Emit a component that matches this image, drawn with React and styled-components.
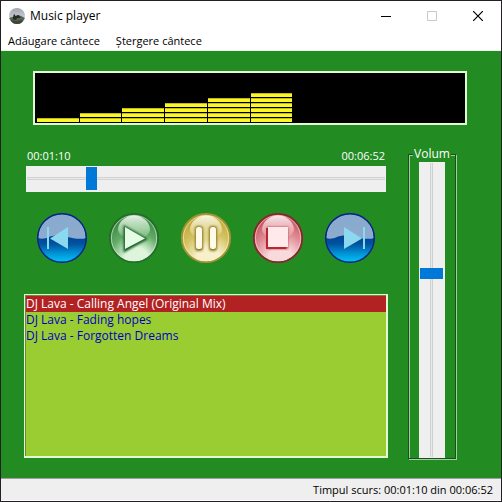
import React, { useState } from "react";
import styled, { createGlobalStyle, css } from "styled-components";

const green = "#228b22";
const pale = "#e4f8d4";

const GlobalStyle = createGlobalStyle`
  *, *::before, *::after { box-sizing: border-box; }
  body {
    margin: 0;
    background: #fff;
    color: #000;
    font-family: "Open Sans", "Noto Sans", sans-serif;
    font-size: 11px;
    line-height: 16px;
  }
  button, input { font: inherit; color: inherit; margin: 0; }
`;

const Window = styled.div`
  display: flex;
  flex-direction: column;
  min-height: 100vh;
  border: 1px solid #231f24;
  background: ${green};
`;

const TitleBar = styled.header`
  display: flex;
  align-items: center;
  height: 30px;
  padding-left: 8px;
  background: #fff;
`;

const Title = styled.h1`
  flex: 1;
  margin: 0 0 0 5px;
  font-size: 12px;
  font-weight: 400;
`;

const CaptionButton = styled.button`
  display: grid;
  place-items: center;
  width: 46px;
  height: 30px;
  padding: 0;
  border: 0;
  background: none;
`;

const MenuBar = styled.nav`
  display: flex;
  gap: 16px;
  height: 20px;
  padding: 0 7px;
  background: #fff;
  border-bottom: 1px solid #eef7ea;
`;

const MenuItem = styled.button`
  padding: 0;
  border: 0;
  background: none;
  line-height: 19px;
`;

const Main = styled.main`
  flex: 1;
  display: flex;
  flex-direction: column;
  gap: 22px;
  padding: 20px 45px 18px 23px;
`;

const Visualizer = styled.div`
  display: grid;
  grid-template-columns: repeat(10, 1fr);
  align-items: end;
  gap: 1px;
  height: 54px;
  margin: 0 -11px 0 9px;
  padding: 1px 2px;
  border: 2px solid ${pale};
  background: #000;
`;

const Bar = styled.div`
  display: flex;
  flex-direction: column;
  gap: 1px;
`;

const Segment = styled.div`
  height: 4px;
  border: 1px solid #c2ba1c;
  border-width: 1px 0 0;
  background: #fbf628;
`;

const Body = styled.div`
  flex: 1;
  display: flex;
  gap: 20px;
`;

const PlayerColumn = styled.div`
  flex: 1;
  min-width: 0;
  display: flex;
  flex-direction: column;
  padding-bottom: 2px;
`;

const Seek = styled.div`
  padding: 1px 2px 0;
`;

const Times = styled.div`
  display: flex;
  justify-content: space-between;
  height: 18px;
  padding: 0 1px;
  color: #fff;
`;

const thumb = css`
  appearance: none;
  border: 0;
  border-radius: 0;
  background: #0078d7;
`;

const Slider = styled.input`
  appearance: none;
  display: block;
  background: #efefef;

  ${(p) =>
    p.$vertical
      ? css`
          writing-mode: vertical-lr;
          direction: rtl;
          flex: 1;
          width: 26px;
          min-height: 0;
          padding: 1px 2px 1px 1px;
          &::-webkit-slider-runnable-track {
            width: 23px;
            background: linear-gradient(to right, transparent 10px, #cfd0d2 10px 11px, #e7eaea 11px 12px, #cfd0d2 12px 13px, transparent 13px);
          }
          &::-webkit-slider-thumb {
            ${thumb}
            width: 23px;
            height: 11px;
          }
        `
      : css`
          width: 100%;
          height: 26px;
          padding: 1px 1px 2px;
          &::-webkit-slider-runnable-track {
            height: 23px;
            background: linear-gradient(transparent 10px, #d2d2d2 10px 11px, #e7eaea 11px 12px, #d2d2d2 12px 13px, transparent 13px);
          }
          &::-webkit-slider-thumb {
            ${thumb}
            width: 11px;
            height: 23px;
          }
        `}
`;

const Controls = styled.div`
  display: grid;
  grid-template-columns: repeat(5, 1fr);
  justify-items: center;
  padding: 20px 2px 30px;
`;

const RoundButton = styled.button`
  width: 52px;
  height: 52px;
  padding: 0;
  border: 0;
  border-radius: 50%;
  background: none;
  svg { display: block; }
`;

const Playlist = styled.ul`
  flex: 1;
  margin: 0;
  padding: 1px 0;
  list-style: none;
  border: 1px solid ${pale};
  border-width: 1px 2px 2px 1px;
  background: #9acd32;
  box-shadow: inset 1px 1px 0 #6f8a35;
`;

const Track = styled.li`
  margin-left: 1px;
  background: ${(p) => (p.$selected ? "#b22222" : "transparent")};
`;

const TrackButton = styled.button`
  display: block;
  width: 100%;
  padding: 0;
  border: 0;
  background: none;
  color: ${(p) => (p.$selected ? "#fff" : "#0000c4")};
  font-size: 12px;
  text-align: left;
  white-space: nowrap;
`;

const VolumeGroup = styled.fieldset`
  display: flex;
  flex-direction: column;
  align-items: center;
  width: 48px;
  min-width: 0;
  margin: 0 0 1px;
  padding: 1px 0 0;
  border: 1px solid #17501a;
  box-shadow: inset 1px 1px 0 #a3cfa0, 1px 1px 0 #a3cfa0;
`;

const VolumeLegend = styled.legend`
  margin: 0 auto;
  padding: 0 1px;
  background: ${green};
  color: #fff;
  font-size: 12px;
  line-height: 14px;
`;

const StatusBar = styled.footer`
  height: 23px;
  padding: 3px 8px 0;
  border-top: 1px solid #a0a0a0;
  border-bottom: 1px solid #fff;
  background: #efefef;
  text-align: right;
`;

const AppIcon = () => (
  <svg width="16" height="16" viewBox="0 0 16 16" aria-hidden="true">
    <defs>
      <clipPath id="app-clip"><circle cx="8" cy="8" r="8" /></clipPath>
      <linearGradient id="app-sky" x1="0" y1="0" x2="0" y2="1">
        <stop offset="0" stopColor="#a4a6b0" />
        <stop offset=".6" stopColor="#c9cbd1" />
      </linearGradient>
    </defs>
    <g clipPath="url(#app-clip)">
      <path fill="url(#app-sky)" d="M0 0h16v16H0z" />
      <path fill="#59634f" d="M0 10l3-1 3-.5 3-1.5 3 1 4 2v6H0z" />
      <path fill="#252b25" d="M4 10l.5-3 1-1 1 2 3-1 2 2-1 1H8l-1 2-3-.5z" />
      <path fill="#3c4638" d="M2 12l5 1 7-1-2 4H4z" />
    </g>
  </svg>
);

const BlueDisc = ({ id, next }) => (
  <svg width="52" height="52" viewBox="0 0 52 52" aria-hidden="true">
    <defs>
      <linearGradient id={id} x1="0" y1="0" x2="0" y2="1">
        <stop offset=".45" stopColor="#004493" />
        <stop offset=".62" stopColor="#00529f" />
        <stop offset=".82" stopColor="#0294d5" />
        <stop offset="1" stopColor="#05c4f4" />
      </linearGradient>
      <linearGradient id={`${id}-gloss`} x1="0" y1="0" x2="0" y2="1">
        <stop offset="0" stopColor="#86aacd" />
        <stop offset="1" stopColor="#8eabcf" />
      </linearGradient>
    </defs>
    <circle cx="26" cy="26" r="24.4" fill={`url(#${id})`} />
    <path fill={`url(#${id}-gloss)`} d="M2 26A24 24 0 0 1 50 26C44 28 37 26 31 25C23 23 18 23 13 25C9 27 5 27 2 26z" />
    <circle cx="26" cy="26" r="24.3" fill="none" stroke="#07228a" strokeWidth="1.4" />
    {next ? (
      <g fill="#8bd9ee">
        <path d="M20 15L38 26.5L20 37z" />
        <path d="M39 15h2v22h-2z" />
      </g>
    ) : (
      <g fill="#8bd9ee">
        <path d="M32 15L14 26.5L32 37z" />
        <path d="M11 15h2v22h-2z" />
      </g>
    )}
  </svg>
);

const GlossDisc = ({ id, rim, dark, mid, light, children }) => (
  <svg width="52" height="52" viewBox="0 0 52 52" aria-hidden="true">
    <defs>
      <radialGradient id={`${id}-base`} cx=".55" cy=".95" r=".9">
        <stop offset="0" stopColor={light} />
        <stop offset=".28" stopColor={light} />
        <stop offset=".62" stopColor={mid} />
        <stop offset=".95" stopColor={dark} />
      </radialGradient>
      <linearGradient id={`${id}-gloss`} x1="0" y1="0" x2="0" y2="1">
        <stop offset="0" stopColor="#fff" stopOpacity=".88" />
        <stop offset=".55" stopColor={light} stopOpacity=".6" />
        <stop offset="1" stopColor={light} stopOpacity=".1" />
      </linearGradient>
      <filter id={`${id}-shade`} x="-30%" y="-30%" width="160%" height="160%">
        <feGaussianBlur stdDeviation="1.3" />
      </filter>
    </defs>
    <circle cx="26" cy="26" r="24.2" fill={`url(#${id}-base)`} stroke={rim} strokeWidth="1.8" />
    <circle cx="26" cy="26" r="22.6" fill="none" stroke={light} strokeWidth="1" opacity=".6" />
    <path fill={`url(#${id}-gloss)`} d="M10 17C11 8 19 3.500 26 3.500S41 8 42 17C42 23 35 27 26 27S10 23 10 17z" />
    {children}
  </svg>
);

const PlayIcon = () => (
  <GlossDisc id="play" rim="#276b2d" dark="#3c8b42" mid="#62ab66" light="#def5dc">
    <path d="M16.500 14.500L38 27L16.500 39z" fill="#185c22" stroke="#185c22" strokeWidth="2" filter="url(#play-shade)" />
    <path d="M17 15L37 26.500L17 37z" fill="#e4fce4" />
  </GlossDisc>
);

const PauseIcon = () => (
  <GlossDisc id="pause" rim="#a39335" dark="#c0aa37" mid="#d4c365" light="#f7f0ca">
    <g fill="#8b741b" filter="url(#pause-shade)">
      <rect x="15" y="14" width="8" height="25" rx="3" />
      <rect x="29" y="14" width="8" height="25" rx="3" />
    </g>
    <rect x="16" y="15" width="6" height="22" rx="2.5" fill="#fffbe9" />
    <rect x="30" y="15" width="6" height="22" rx="2.5" fill="#fffbe9" />
  </GlossDisc>
);

const StopIcon = () => (
  <GlossDisc id="stop" rim="#84282d" dark="#c65560" mid="#e08c95" light="#f8dadd">
    <path d="M15 15h21v22H15z" fill="#b8303c" filter="url(#stop-shade)" />
    <path d="M14 16h3v19h17v2H14z" fill="#b82632" />
    <path d="M16 15h20v20H16z" fill="#ffe9eb" />
  </GlossDisc>
);

const controls = [
  { label: "Previous", icon: <BlueDisc id="prev" /> },
  { label: "Play", icon: <PlayIcon /> },
  { label: "Pause", icon: <PauseIcon /> },
  { label: "Stop", icon: <StopIcon /> },
  { label: "Next", icon: <BlueDisc id="next" next /> },
];

const levels = [1, 2, 3, 4, 5, 6, 0, 0, 0, 0];

const tracks = [
  "DJ Lava - Calling Angel (Original Mix)",
  "DJ Lava - Fading hopes",
  "DJ Lava - Forgotten Dreams",
];

const DURATION = 412;

const clock = (s) =>
  [Math.floor(s / 3600), Math.floor(s / 60) % 60, s % 60]
    .map((n) => String(n).padStart(2, "0"))
    .join(":");

export default function App() {
  const [position, setPosition] = useState(70);
  const [volume, setVolume] = useState(63);
  const [current, setCurrent] = useState(0);

  return (
    <>
      <GlobalStyle />
      <Window>
        <TitleBar>
          <AppIcon />
          <Title>Music player</Title>
          <CaptionButton aria-label="Minimize">
            <svg width="10" height="10" viewBox="0 0 10 10"><path d="M0 5.500h10" stroke="#000" /></svg>
          </CaptionButton>
          <CaptionButton aria-label="Maximize" disabled>
            <svg width="10" height="10" viewBox="0 0 10 10"><path d="M.5.5h9v9h-9z" fill="none" stroke="#c8c8c8" /></svg>
          </CaptionButton>
          <CaptionButton aria-label="Close">
            <svg width="10" height="10" viewBox="0 0 10 10"><path d="M0 0l10 10M10 0L0 10" stroke="#000" strokeWidth="1.2" /></svg>
          </CaptionButton>
        </TitleBar>
        <MenuBar>
          <MenuItem>Adăugare cântece</MenuItem>
          <MenuItem>Ștergere cântece</MenuItem>
        </MenuBar>
        <Main>
          <Visualizer>
            {levels.map((level, i) => (
              <Bar key={i}>
                {Array.from({ length: level }, (_, n) => <Segment key={n} />)}
              </Bar>
            ))}
          </Visualizer>
          <Body>
            <PlayerColumn>
              <Seek>
                <Times>
                  <span>{clock(position)}</span>
                  <span>{clock(DURATION)}</span>
                </Times>
                <Slider
                  type="range"
                  aria-label="Position"
                  max={DURATION}
                  value={position}
                  onChange={(e) => setPosition(Number(e.target.value))}
                />
              </Seek>
              <Controls>
                {controls.map(({ label, icon }) => (
                  <RoundButton key={label} aria-label={label}>{icon}</RoundButton>
                ))}
              </Controls>
              <Playlist>
                {tracks.map((name, i) => (
                  <Track key={name} $selected={i === current}>
                    <TrackButton $selected={i === current} onClick={() => setCurrent(i)}>{name}</TrackButton>
                  </Track>
                ))}
              </Playlist>
            </PlayerColumn>
            <VolumeGroup>
              <VolumeLegend>Volum</VolumeLegend>
              <Slider
                $vertical
                type="range"
                aria-label="Volum"
                value={volume}
                onChange={(e) => setVolume(Number(e.target.value))}
              />
            </VolumeGroup>
          </Body>
        </Main>
        <StatusBar>Timpul scurs: {clock(position)} din {clock(DURATION)}</StatusBar>
      </Window>
    </>
  );
}
